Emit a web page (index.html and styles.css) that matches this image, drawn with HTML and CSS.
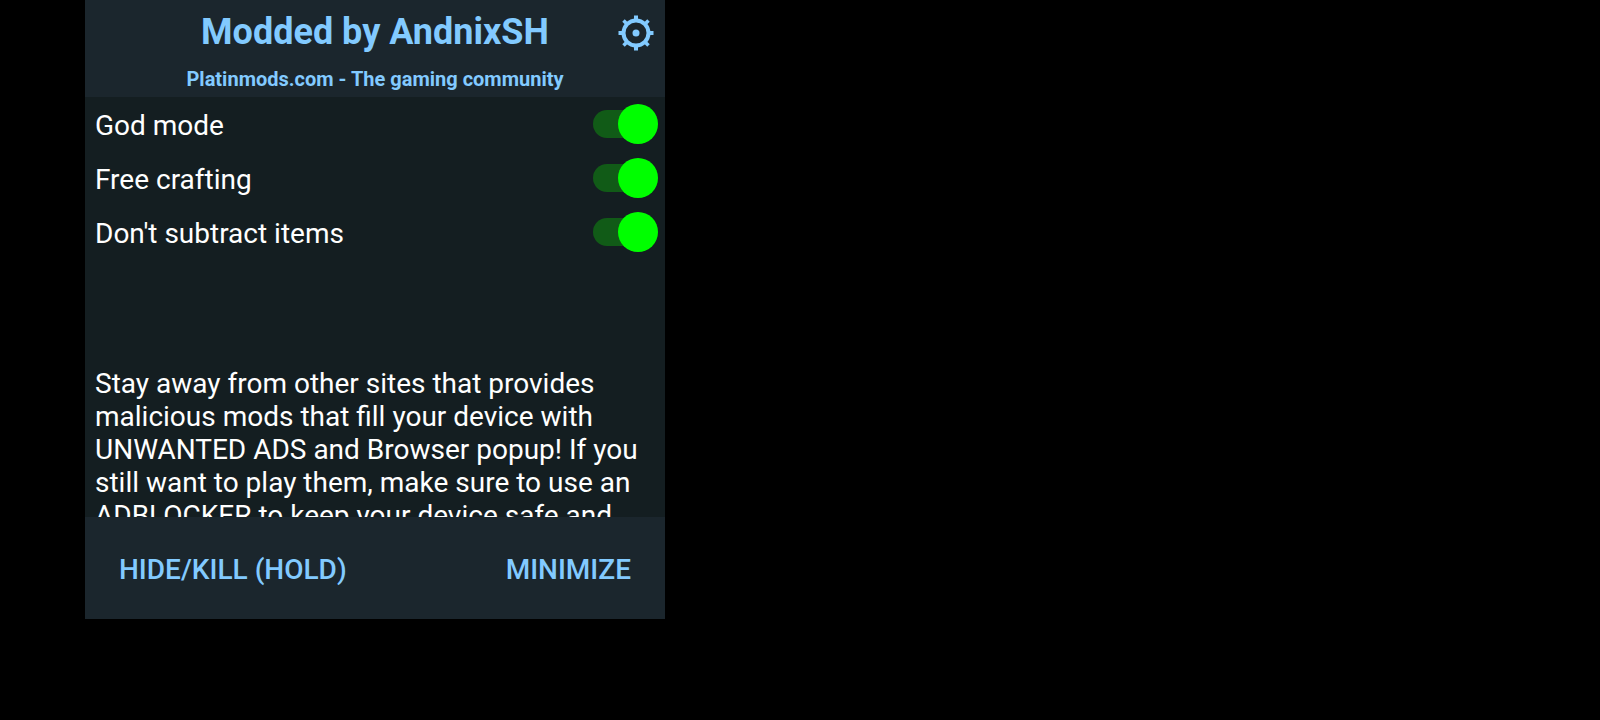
FILE: index.html
```html
<!DOCTYPE html>
<html lang="en">
<head>
<meta charset="utf-8">
<meta name="viewport" content="width=device-width, initial-scale=1">
<title>Modded by AndnixSH</title>
<link rel="stylesheet" href="styles.css">
</head>
<body>
<main class="menu">
  <header class="menu-header">
    <h1 class="title">Modded by AndnixSH</h1>
    <p class="subtitle">Platinmods.com - The gaming community</p>
    <button class="settings" type="button" aria-label="Settings">
      <svg class="gear" viewBox="0 0 36 36" aria-hidden="true">
        <g fill="none" stroke="currentColor" stroke-width="4">
          <circle cx="18" cy="18" r="12.500"/>
          <path d="M18 .5V6M18 30v5.500M.5 18H6M30 18h5.500"/>
          <path stroke-width="3.500" d="M5.500 5.500l4 4M26.500 26.500l4 4M30.500 5.500l-4 4M9.500 26.500l-4 4"/>
        </g>
        <circle cx="18" cy="18" r="3.500" fill="currentColor"/>
      </svg>
    </button>
  </header>
  <section class="content">
    <div class="row">
      <label for="god">God mode</label>
      <input class="switch" id="god" type="checkbox" role="switch" checked>
    </div>
    <div class="row">
      <label for="craft">Free crafting</label>
      <input class="switch" id="craft" type="checkbox" role="switch" checked>
    </div>
    <div class="row">
      <label for="items">Don't subtract items</label>
      <input class="switch" id="items" type="checkbox" role="switch" checked>
    </div>
    <p class="notice">Stay away from other sites that provides malicious mods that fill your device with UNWANTED ADS and Browser popup! If you still want to play them, make sure to use an ADBLOCKER to keep your device safe and</p>
  </section>
  <footer class="menu-footer">
    <button class="action" type="button">HIDE/KILL (HOLD)</button>
    <button class="action" type="button">MINIMIZE</button>
  </footer>
</main>
</body>
</html>
```
FILE: styles.css
```css
* {
  box-sizing: border-box;
}

body {
  margin: 0;
  padding-left: 85px;
  background: #000;
  color: #fff;
  font: 28px/33px Roboto, sans-serif;
}

.menu {
  max-width: 580px;
  background: #141e21;
}

.menu-header {
  position: relative;
  padding: 11px 0 6px;
  background: #1b262d;
  color: #82caff;
  text-align: center;
}

.title {
  margin: 0 0 14px;
  font-size: 36px;
  line-height: 42px;
  font-weight: 700;
}

.subtitle {
  margin: 0;
  font-size: 20px;
  line-height: 24px;
  font-weight: 700;
}

.settings,
.action {
  border: 0;
  background: none;
  color: #82caff;
  font: inherit;
  cursor: pointer;
}

.settings {
  position: absolute;
  top: 15px;
  right: 11px;
  padding: 0;
}

.gear {
  display: block;
  width: 36px;
  height: 36px;
}

.content {
  max-height: 420px;
  overflow-y: auto;
  scrollbar-width: none;
}

.row {
  display: flex;
  align-items: center;
  justify-content: space-between;
  padding: 7px 7px 7px 10px;
}

.row label {
  padding-top: 3px;
}

.switch {
  appearance: none;
  position: relative;
  display: flex;
  align-items: center;
  justify-content: flex-end;
  width: 65px;
  height: 40px;
  margin: 0;
  cursor: pointer;
}

.switch::before {
  content: "";
  position: absolute;
  inset: 6px 6px 6px 0;
  border-radius: 14px;
  background: #115b17;
}

.switch::after {
  content: "";
  position: relative;
  width: 40px;
  height: 40px;
  border-radius: 50%;
  background: #00ff00;
}

.switch:not(:checked) {
  justify-content: flex-start;
}

.notice {
  margin: 0;
  padding: 108px 10px 12px;
}

.menu-footer {
  display: flex;
  justify-content: space-between;
  padding: 36px 34px 33px;
  background: #1b262d;
}

.action {
  padding: 0;
  font-weight: 500;
}
```
